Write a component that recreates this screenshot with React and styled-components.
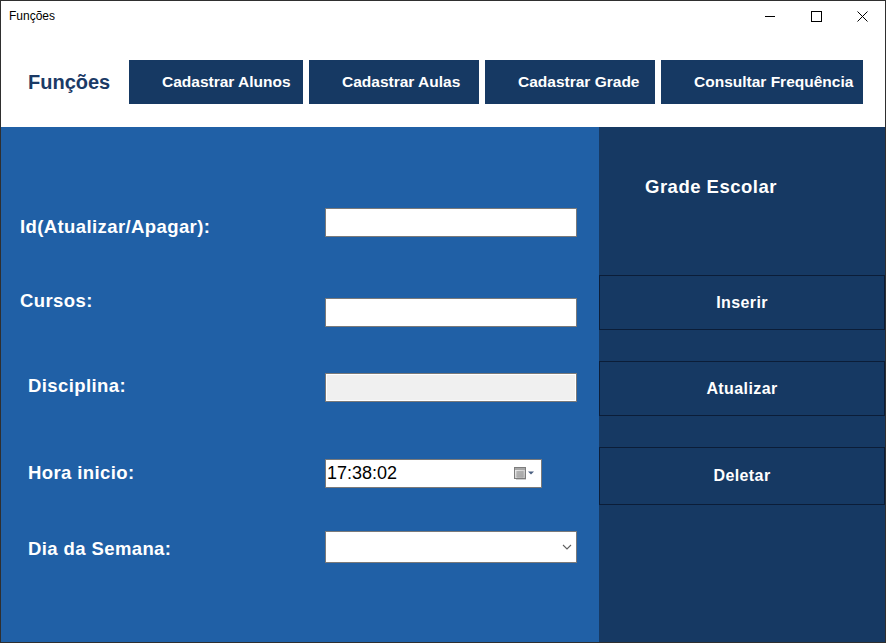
import React from 'react'
import styled, { createGlobalStyle } from 'styled-components'

const GlobalStyle = createGlobalStyle`
  html, body {
    margin: 0;
    padding: 0;
    background: #ffffff;
  }
  body {
    font-family: "Liberation Sans", Arial, sans-serif;
  }
`

const NAVY = '#163963'
const BLUE = '#2060a6'

const Styled = {
    Window: styled.div`
      width: 886px;
      height: 643px;
      box-sizing: border-box;
      border: 1px solid #2f2f2f;
      display: flex;
      flex-direction: column;
      overflow: hidden;
      background-color: #ffffff;
    `,
    TitleBar: styled.div`
      display: flex;
      align-items: center;
      height: 30px;
      padding-left: 8px;
      font-size: 12px;
      color: #000000;
    `,
    Controls: styled.div`
      display: flex;
      margin-left: auto;
      height: 30px;
    `,
    Control: styled.div`
      display: flex;
      align-items: center;
      justify-content: center;
      width: 46px;
      height: 30px;
    `,
    Header: styled.div`
      display: flex;
      align-items: flex-start;
      height: 96px;
      box-sizing: border-box;
      padding: 29px 0 0 27px;
    `,
    Brand: styled.div`
      width: 101px;
      height: 44px;
      line-height: 44px;
      font-size: 20px;
      font-weight: bold;
      color: #1b3a66;
    `,
    Nav: styled.div`
      display: flex;
      gap: 6px;
    `,
    NavButton: styled.button`
      width: ${props => props.w}px;
      height: 44px;
      border: none;
      padding: 0 0 0 33px;
      text-align: left;
      background-color: ${NAVY};
      color: #ffffff;
      font-family: "Liberation Sans", Arial, sans-serif;
      font-size: 15.5px;
      font-weight: bold;
      white-space: nowrap;
    `,
    Main: styled.div`
      flex: 1;
      display: flex;
    `,
    Form: styled.div`
      width: 598px;
      box-sizing: border-box;
      padding: 81px 0 0 19px;
      background-color: ${BLUE};
    `,
    Field: styled.div`
      display: grid;
      grid-template-columns: 305px 252px;
      align-items: start;
      margin-top: ${props => props.top || 0}px;
    `,
    Label: styled.div`
      margin-top: ${props => props.shift || 0}px;
      margin-left: ${props => props.indent || 0}px;
      font-size: 18.5px;
      line-height: 21px;
      font-weight: bold;
      letter-spacing: 0.4px;
      color: #ffffff;
      white-space: nowrap;
    `,
    TextBox: styled.input`
      display: block;
      width: 252px;
      height: 29px;
      box-sizing: border-box;
      margin: ${props => props.shift || 0}px 0 0 0;
      padding: 0 2px;
      border: 1px solid #7a7a7a;
      outline: none;
      background-color: #ffffff;
      font-family: "Liberation Sans", Arial, sans-serif;
      font-size: 14px;

      &:disabled {
        background-color: #f0f0f0;
        box-shadow: inset 0 0 0 1px #ffffff;
      }
    `,
    TimeBox: styled.div`
      display: flex;
      align-items: center;
      width: 217px;
      height: 29px;
      box-sizing: border-box;
      padding: 0 6px 0 1px;
      border: 1px solid #7a7a7a;
      background-color: #ffffff;
      font-size: 18px;
      color: #000000;
    `,
    TimeText: styled.span`
      flex: 1;
    `,
    Combo: styled.div`
      display: flex;
      align-items: center;
      justify-content: flex-end;
      width: 252px;
      height: 32px;
      box-sizing: border-box;
      padding-right: 4px;
      border: 1px solid #7a7a7a;
      background-color: #ffffff;
    `,
    Side: styled.div`
      flex: 1;
      display: flex;
      flex-direction: column;
      background-color: ${NAVY};
    `,
    SideTitle: styled.div`
      margin: 49px 0 0 46px;
      font-size: 18.5px;
      line-height: 21px;
      font-weight: bold;
      letter-spacing: 0.5px;
      color: #ffffff;
    `,
    SideButton: styled.button`
      width: 100%;
      height: ${props => props.h}px;
      margin-top: ${props => props.top}px;
      border: 1px solid #0b1d38;
      background-color: ${NAVY};
      color: #ffffff;
      font-family: "Liberation Sans", Arial, sans-serif;
      font-size: 16px;
      font-weight: bold;
      letter-spacing: 0.4px;
    `,
}

const CalendarIcon = () => (
    <svg width="21" height="13" viewBox="0 0 21 13">
        <defs>
            <linearGradient id="cal" x1="0" y1="0" x2="1" y2="1">
                <stop offset="0" stopColor="#f4f4f4" />
                <stop offset="1" stopColor="#b8b8b8" />
            </linearGradient>
        </defs>
        <rect x="0.5" y="0.5" width="11" height="11" fill="url(#cal)" stroke="#7d7d7d" />
        <rect x="1" y="1" width="10" height="2" fill="#a8a8a8" />
        <path d="M2 5h8M2 7h8M2 9h8M4 4v7M6 4v7M8 4v7" stroke="#9a9a9a" strokeWidth="0.8" />
        <rect x="2" y="12" width="10" height="1" fill="#cfcfcf" />
        <polygon points="14,4.5 20,4.5 17,7.5" fill="#4a5f80" />
    </svg>
)

const Chevron = () => (
    <svg width="10" height="6" viewBox="0 0 10 6">
        <polyline points="1,1 5,5 9,1" fill="none" stroke="#606060" strokeWidth="1.1" />
    </svg>
)

const App = () => {
    return (
        <>
            <GlobalStyle />
            <Styled.Window>
                <Styled.TitleBar>
                    Funções
                    <Styled.Controls>
                        <Styled.Control>
                            <svg width="11" height="11" viewBox="0 0 11 11">
                                <path d="M0 5.5h10" stroke="#000" strokeWidth="1" />
                            </svg>
                        </Styled.Control>
                        <Styled.Control>
                            <svg width="11" height="11" viewBox="0 0 11 11">
                                <rect x="0.5" y="0.5" width="10" height="10" fill="none" stroke="#000" />
                            </svg>
                        </Styled.Control>
                        <Styled.Control>
                            <svg width="11" height="11" viewBox="0 0 11 11">
                                <path d="M0.5 0.5L10.5 10.5M10.5 0.5L0.5 10.5" stroke="#000" strokeWidth="1" />
                            </svg>
                        </Styled.Control>
                    </Styled.Controls>
                </Styled.TitleBar>

                <Styled.Header>
                    <Styled.Brand>Funções</Styled.Brand>
                    <Styled.Nav>
                        <Styled.NavButton w={174}>Cadastrar Alunos</Styled.NavButton>
                        <Styled.NavButton w={170}>Cadastrar Aulas</Styled.NavButton>
                        <Styled.NavButton w={170}>Cadastrar Grade</Styled.NavButton>
                        <Styled.NavButton w={202}>Consultar Frequência</Styled.NavButton>
                    </Styled.Nav>
                </Styled.Header>

                <Styled.Main>
                    <Styled.Form>
                        <Styled.Field>
                            <Styled.Label shift={8}>Id(Atualizar/Apagar):</Styled.Label>
                            <Styled.TextBox readOnly />
                        </Styled.Field>
                        <Styled.Field top={53}>
                            <Styled.Label>Cursos:</Styled.Label>
                            <Styled.TextBox readOnly shift={8} />
                        </Styled.Field>
                        <Styled.Field top={46}>
                            <Styled.Label shift={2} indent={8}>Disciplina:</Styled.Label>
                            <Styled.TextBox disabled />
                        </Styled.Field>
                        <Styled.Field top={57}>
                            <Styled.Label shift={2.5} indent={8}>Hora inicio:</Styled.Label>
                            <Styled.TimeBox>
                                <Styled.TimeText>17:38:02</Styled.TimeText>
                                <CalendarIcon />
                            </Styled.TimeBox>
                        </Styled.Field>
                        <Styled.Field top={43}>
                            <Styled.Label shift={7} indent={8}>Dia da Semana:</Styled.Label>
                            <Styled.Combo>
                                <Chevron />
                            </Styled.Combo>
                        </Styled.Field>
                    </Styled.Form>

                    <Styled.Side>
                        <Styled.SideTitle>Grade Escolar</Styled.SideTitle>
                        <Styled.SideButton h={55} top={78}>Inserir</Styled.SideButton>
                        <Styled.SideButton h={55} top={31}>Atualizar</Styled.SideButton>
                        <Styled.SideButton h={58} top={31}>Deletar</Styled.SideButton>
                    </Styled.Side>
                </Styled.Main>
            </Styled.Window>
        </>
    )
}

export default App
